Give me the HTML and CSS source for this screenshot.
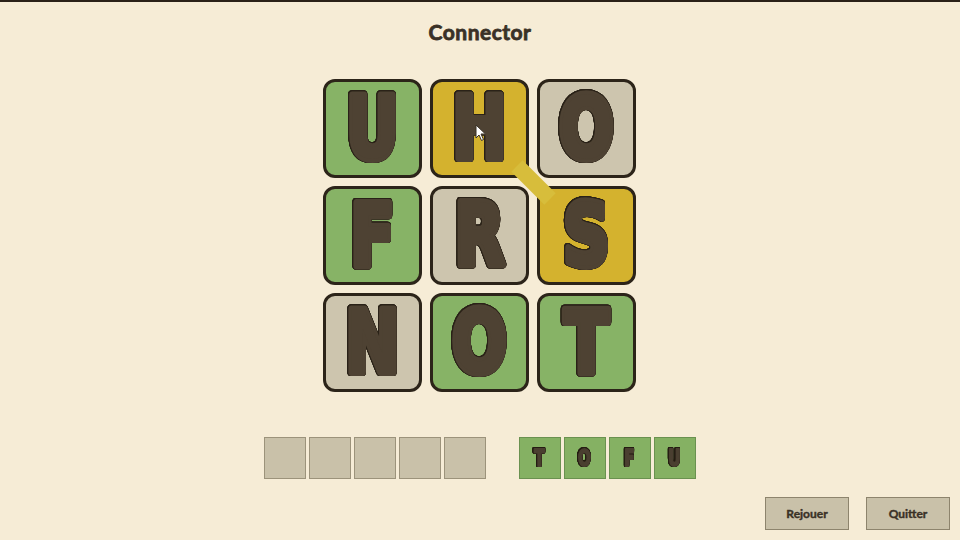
FILE: index.html
```html
<!DOCTYPE html>
<html lang="fr">
<head>
<meta charset="utf-8">
<title>Connector</title>
<link rel="stylesheet" href="styles.css">
</head>
<body>
<div class="topbar"></div>
<main class="page">
  <h1 class="title">Connector</h1>
  <div class="board">
    <div class="tile green"><svg class="glyph" viewBox="0 0 93 93"><text transform="translate(46.5 76) scale(0.76 1)">U</text></svg></div>
    <div class="tile yellow"><svg class="glyph" viewBox="0 0 93 93"><text transform="translate(46.5 76) scale(0.76 1)">H</text></svg></div>
    <div class="tile gray"><svg class="glyph" viewBox="0 0 93 93"><text transform="translate(46.5 76) scale(0.76 1)">O</text></svg></div>
    <div class="tile green"><svg class="glyph" viewBox="0 0 93 93"><text transform="translate(46.5 76) scale(0.76 1)">F</text></svg></div>
    <div class="tile gray"><svg class="glyph" viewBox="0 0 93 93"><text transform="translate(46.5 76) scale(0.76 1)">R</text></svg></div>
    <div class="tile yellow"><svg class="glyph" viewBox="0 0 93 93"><text transform="translate(46.5 76) scale(0.76 1)">S</text></svg></div>
    <div class="tile gray"><svg class="glyph" viewBox="0 0 93 93"><text transform="translate(46.5 76) scale(0.76 1)">N</text></svg></div>
    <div class="tile green"><svg class="glyph" viewBox="0 0 93 93"><text transform="translate(46.5 76) scale(0.76 1)">O</text></svg></div>
    <div class="tile green"><svg class="glyph" viewBox="0 0 93 93"><text transform="translate(46.5 76) scale(0.76 1)">T</text></svg></div>
    <svg class="link" width="313" height="313" viewBox="0 0 313 313">
      <line x1="194" y1="87" x2="227" y2="120" stroke="#d7bd3b" stroke-width="16"/>
    </svg>
    <svg class="cursor" width="12" height="18" viewBox="0 0 12 18">
      <path d="M1 1 L1 14 L4 11 L6.5 16.5 L8.5 15.5 L6 10 L10.5 10 Z" fill="#ffffff" stroke="#3a3226" stroke-width="1"/>
    </svg>
  </div>
  <div class="words">
    <div class="slots">
      <div class="slot empty"></div>
      <div class="slot empty"></div>
      <div class="slot empty"></div>
      <div class="slot empty"></div>
      <div class="slot empty"></div>
    </div>
    <div class="slots">
      <div class="slot found"><svg class="mini" viewBox="0 0 39 39"><text transform="translate(19.5 28) scale(0.66 1)">T</text></svg></div>
      <div class="slot found"><svg class="mini" viewBox="0 0 39 39"><text transform="translate(19.5 28) scale(0.66 1)">O</text></svg></div>
      <div class="slot found"><svg class="mini" viewBox="0 0 39 39"><text transform="translate(19.5 28) scale(0.66 1)">F</text></svg></div>
      <div class="slot found"><svg class="mini" viewBox="0 0 39 39"><text transform="translate(19.5 28) scale(0.66 1)">U</text></svg></div>
    </div>
  </div>
  <div class="actions">
    <button class="btn">Rejouer</button>
    <button class="btn">Quitter</button>
  </div>
</main>
</body>
</html>
```

FILE: styles.css
```css
* { box-sizing: border-box; }
html, body { margin: 0; padding: 0; }
body {
  width: 960px;
  height: 540px;
  overflow: hidden;
  background: #f6ecd6;
  font-family: Lato, "Open Sans", sans-serif;
  color: #3a3024;
}
.topbar {
  height: 2px;
  background: #2a2118;
}
.page {
  display: flex;
  flex-direction: column;
  align-items: center;
}
.title {
  margin: 17px 0 0 0;
  font-size: 21px;
  line-height: 25px;
  font-weight: 700;
  color: #3a3126;
  -webkit-text-stroke: 0.8px #3a3126;
  letter-spacing: 0.5px;
}
.board {
  position: relative;
  margin-top: 35px;
  margin-left: -2px;
  display: grid;
  grid-template-columns: repeat(3, 99px);
  grid-auto-rows: 99px;
  gap: 8px;
}
.tile {
  border: 3px solid #2c2419;
  border-radius: 12px;
  overflow: hidden;
}
.glyph {
  display: block;
  width: 93px;
  height: 93px;
  overflow: visible;
  filter: drop-shadow(0.7px 0 0 #2a2218) drop-shadow(-0.7px 0 0 #2a2218) drop-shadow(0 0.7px 0 #2a2218) drop-shadow(0 -0.7px 0 #2a2218);
}
.glyph text {
  font-family: "DejaVu Sans", sans-serif;
  font-weight: 700;
  font-size: 85px;
  text-anchor: middle;
  fill: #4e4233;
  stroke: #4e4233;
  stroke-width: 8px;
  stroke-linejoin: round;
  paint-order: stroke fill;
}
.green { background: #87b366; }
.yellow { background: #d4b22e; }
.gray { background: #cdc5ae; }
.link {
  position: absolute;
  left: 0;
  top: 0;
  pointer-events: none;
}
.cursor {
  position: absolute;
  left: 152px;
  top: 45px;
}
.words {
  margin-top: 45px;
  margin-left: -1px;
  display: flex;
  gap: 33px;
}
.slots {
  display: flex;
  gap: 3px;
}
.slot {
  width: 42px;
  height: 42px;
}
.slot.empty {
  background: #c9c1a9;
  border: 1.5px solid #9c937b;
}
.slot.found {
  background: #85b163;
  border: 1.5px solid #6a9150;
}
.mini {
  display: block;
  width: 39px;
  height: 39px;
  overflow: visible;
  filter: drop-shadow(0.4px 0 0 #241c12) drop-shadow(-0.4px 0 0 #241c12) drop-shadow(0 0.4px 0 #241c12) drop-shadow(0 -0.4px 0 #241c12);
}
.mini text {
  font-family: "DejaVu Sans", sans-serif;
  font-weight: 700;
  font-size: 23px;
  text-anchor: middle;
  fill: #4a3f30;
  stroke: #4a3f30;
  stroke-width: 2.2px;
  stroke-linejoin: round;
  paint-order: stroke fill;
}
.actions {
  align-self: stretch;
  margin-top: 18px;
  padding-right: 10px;
  display: flex;
  justify-content: flex-end;
  gap: 17px;
}
.btn {
  width: 84px;
  height: 33px;
  background: #c9c1a9;
  border: 1.5px solid #8d846d;
  border-radius: 0;
  font-family: Lato, sans-serif;
  font-weight: 700;
  font-size: 12px;
  -webkit-text-stroke: 0.4px #3a3126;
  color: #3a3126;
  padding: 0;
}
```
